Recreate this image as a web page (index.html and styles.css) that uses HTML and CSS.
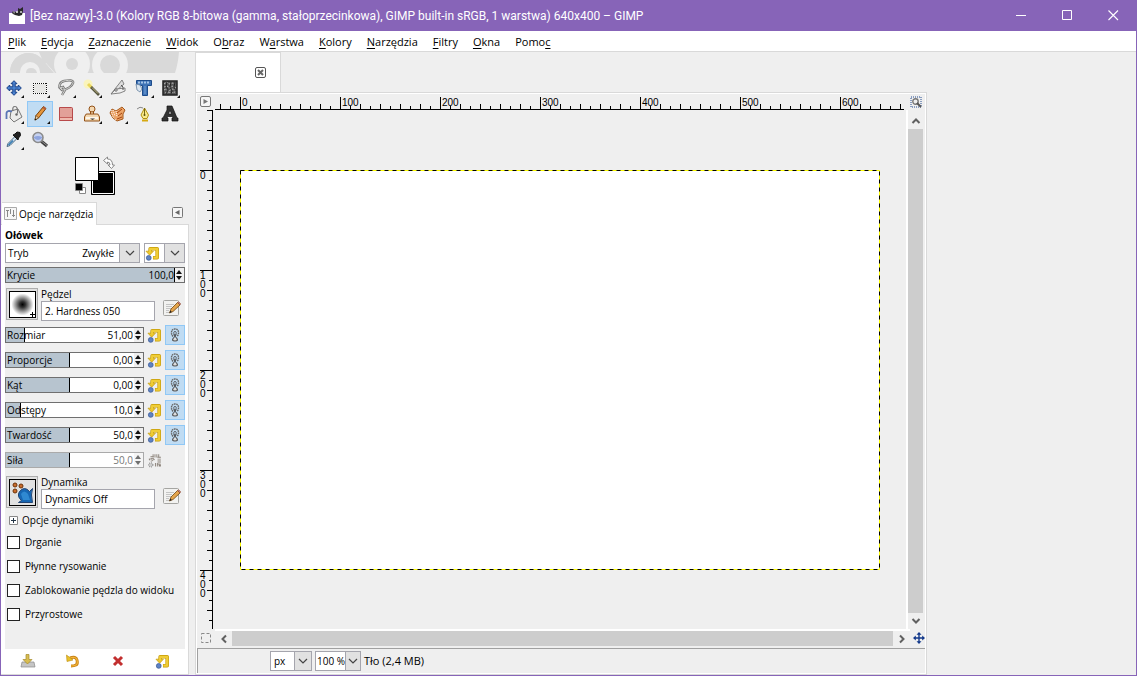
FILE: index.html
```html
<!DOCTYPE html>
<html lang="pl">
<head>
<meta charset="utf-8">
<title>GIMP</title>
<link rel="stylesheet" href="styles.css">
</head>
<body>
<svg class="defs" aria-hidden="true">
  <symbol id="reset" viewBox="0 0 16 16">
    <path d="M8.500 12.500H13V3H5.500v3.500" fill="none" stroke="#c49a06" stroke-width="3.800" stroke-linejoin="round"/>
    <path d="M1 5.500h8L5 9.800z" fill="#edc72c" stroke="#c49a06" stroke-width=".7"/>
    <path d="M9 12.500H13V3H5.500v4" fill="none" stroke="#f0cd36" stroke-width="2.400" stroke-linejoin="round"/>
    <circle cx="4" cy="12.700" r="2.600" fill="#5f83c2" stroke="#2f4f8f" stroke-width=".7"/>
  </symbol>
  <symbol id="link" viewBox="0 0 16 16">
    <g fill="none">
      <path d="M6 9.500Q4.200 7.500 4.500 5 5 2 8 2t3.500 3q.3 2.500-1.500 4.500" stroke="#666" stroke-width="1.400" stroke-dasharray="1.600 .6"/>
      <path d="M8 4.500q-1.300 0-1.300 1.300Q6.700 7 8 8q1.300-1 1.300-2.200Q9.300 4.500 8 4.500z" stroke="#444" stroke-width=".8"/>
      <path d="M6.500 7.500l3 3.500M9.500 7.500l-3 3.500" stroke="#444"/>
      <path d="M6.500 11q-2.500 3 1.500 3t1.500-3" fill="#ddd" stroke="#555" stroke-width="1.200"/>
    </g>
  </symbol>
  <symbol id="edit" viewBox="0 0 18 18">
    <rect x=".5" y="1.500" width="15" height="15" rx="1" fill="#f2f2f0" stroke="#a5a5a2"/>
    <path d="M3 5.500h8M3 7.500h6M3 9.500h5M3 11.500h3M3 13.500h3" stroke="#c4c4c4"/>
    <path d="M6.500 14l1.500-4 6.500-6.500L17 6l-7 6.500z" fill="#e5a54c" stroke="#71460f" stroke-width=".8"/>
    <path d="M14.500 3.500L17 6l.7-1.200-2-2z" fill="#c98787" stroke="#8c4a30" stroke-width=".6"/>
    <path d="M6.500 14l.8-2.500 1.600 1.600z" fill="#222"/>
  </symbol>
  <symbol id="move" viewBox="0 0 16 16">
    <path d="M8 .7l3 3H9.200v3.100h3.100V5l3 3-3 3V9.200H9.200v3.100H11l-3 3-3-3h1.800V9.200H3.700V11l-3-3 3-3v1.800h3.100V3.700H5z" fill="#4a83d0" stroke="#173f86" stroke-width="1"/>
  </symbol>
  <symbol id="pan" viewBox="0 0 12 12">
    <path d="M6 1.500v9M1.500 6h9" stroke="#12388a" stroke-width="1.400"/>
    <path d="M6 0l2.500 2.800h-5zM6 12l2.500-2.800h-5zM0 6l2.800-2.500v5zM12 6L9.200 3.500v5z" fill="#12388a"/>
  </symbol>
  <symbol id="chev" viewBox="0 0 10 10"><path d="M1 3l4 4 4-4" fill="none" stroke="currentColor" stroke-width="1.200"/></symbol>
  <symbol id="arrow" viewBox="0 0 10 10"><path d="M1.500 3l3.500 3.500L8.500 3" fill="none" stroke="#606060" stroke-width="2"/></symbol>
</svg>
<div class="window">
  <header class="titlebar">
    <svg class="app-icon" width="18" height="18" viewBox="0 0 18 18"><path d="M1 6h16v11H1z" fill="#fff"/><path d="M4 6l1-2 2 1 3-1V1l2 1 3-2v4l-1 4-3 1-4-1-2-1z" fill="#282828"/><path d="M5 4l2 1-1 2zM12 4h2v2h-2z" fill="#aaa"/><circle cx="9" cy="5" r="1" fill="#eee"/></svg>
    <h1 class="title">[Bez nazwy]-3.0 (Kolory RGB 8-bitowa (gamma, stałoprzecinkowa), GIMP built-in sRGB, 1 warstwa) 640x400 – GIMP</h1>
    <button class="caption-button" aria-label="Minimalizuj"><svg width="11" height="11"><path d="M0 5.500h10" stroke="#fff"/></svg></button>
    <button class="caption-button" aria-label="Maksymalizuj"><svg width="11" height="11"><path d="M.5.5h9v9h-9z" fill="none" stroke="#fff"/></svg></button>
    <button class="caption-button" aria-label="Zamknij"><svg width="11" height="11"><path d="M.5.5l9.500 9.500M10 .5L.5 10" stroke="#fff" stroke-width="1.100"/></svg></button>
  </header>
  <nav class="menubar">
    <a href="#"><u>P</u>lik</a><a href="#"><u>E</u>dycja</a><a href="#"><u>Z</u>aznaczenie</a><a href="#"><u>W</u>idok</a><a href="#">O<u>b</u>raz</a><a href="#">W<u>a</u>rstwa</a><a href="#"><u>K</u>olory</a><a href="#"><u>N</u>arzędzia</a><a href="#"><u>F</u>iltry</a><a href="#"><u>O</u>kna</a><a href="#">Pomo<u>c</u></a>
  </nav>
  <main class="workspace">
    <aside class="dock">
      <svg class="banner" width="188" height="21" viewBox="0 0 188 21" aria-hidden="true">
        <path d="M9 21C9 9 17 1 28 1c5 0 9 2 13 6l-3-7h140q-1 12-4 21H54L45 11z" fill="#d9d9d9"/>
        <path d="M9 21C9 9 17 1 28 1q8 0 14 7l11 13z" fill="#d9d9d9"/>
        <circle cx="29" cy="20" r="10" fill="#efefef"/><path d="M25 21q0-5 5-5t6 5z" fill="#d9d9d9"/>
        <circle cx="71" cy="12" r="18" fill="#efefef"/><circle cx="109" cy="13" r="18" fill="#efefef"/>
        <circle cx="71" cy="12" r="6" fill="#d9d9d9"/><circle cx="109" cy="13" r="10" fill="#d9d9d9"/>
      </svg>
      <div class="toolbox">
        <button class="tool more" aria-label="Przesunięcie"><svg width="16" height="16"><use href="#move"/></svg></button>
        <button class="tool more" aria-label="Zaznaczenie prostokątne"><svg width="14" height="11"><path d="M.5.5h13v10H.5z" fill="#e6e6e4" stroke="#fff"/><path d="M0 .5h14M0 10.500h14M.5 0v11M13.500 0v11" fill="none" stroke="#111" stroke-dasharray="1 1"/></svg></button>
        <button class="tool more" aria-label="Odręczne zaznaczenie"><svg width="18" height="18"><g fill="none"><path d="M5 10C1 9 2 3 7 2s10-1 9 2-6 7-11 7l-2-2 3-1 2 3-3 5" stroke="#777" stroke-width="2.400"/><path d="M5 10C1 9 2 3 7 2s10-1 9 2-6 7-11 7l-2-2 3-1 2 3-3 5" stroke="#d0d0cd"/></g></svg></button>
        <button class="tool more" aria-label="Zaznaczenie rozmyte"><svg width="18" height="18"><circle cx="5" cy="5" r="4.500" fill="#faf4bb"/><path d="M5 5l4 4" stroke="#e9d65a" stroke-width="3"/><path d="M8 8l8 8" stroke="#55543c" stroke-width="2.600"/><path d="M9 8.500l6 6" stroke="#c2b98a" stroke-width="1"/></svg></button>
        <button class="tool" aria-label="Kadrowanie"><svg width="18" height="18"><path d="M2 15L13 1l2 4-8 7z" fill="#ddd" stroke="#777" stroke-width=".9"/><path d="M2 15l5-5 9-1v3l-5 2z" fill="#eee" stroke="#777" stroke-width=".9"/><circle cx="7" cy="11" r="1.200" fill="#fff" stroke="#666"/><path d="M12 6l2 2v3" stroke="#555" fill="none"/></svg></button>
        <button class="tool more" aria-label="Przekształcenie"><svg width="18" height="18"><path d="M1.500 1.500h15v5h-4v10H7.500v-10h-6z" fill="#3f73b5" stroke="#1c4b8b"/><path d="M3 3.500h12" stroke="#a6c5e8" stroke-width="2" stroke-dasharray="2 1"/><path d="M10 7v8" stroke="#75a1d6"/><path d="M1 5l4 1 2 4-2 3-3-2z" fill="#dce6f0" stroke="#68839f" stroke-width=".8"/></svg></button>
        <button class="tool more" aria-label="Deformacja"><svg width="16" height="16"><path d="M1 1h14v14H1z" fill="#555" stroke="#222" stroke-width="1.500"/><path d="M2 4l3-2 2 2 3-1 3 1M2 7l3-1 3 2 2-2 4 2M2 10l2-1 3 2 3-2 4 1M3 13l3-1 3 1 4-1" fill="none" stroke="#bbb" stroke-dasharray="2 1"/><path d="M5 2l-1 4 2 4-2 4M9 2l-1 5 2 4-1 3M13 2l-1 5 2 4" fill="none" stroke="#222"/></svg></button>
        <button class="tool more" aria-label="Wypełnianie kubełkiem"><svg width="18" height="18"><path d="M6 6l7-2 4 8-8 5-4-4z" fill="#ececea" stroke="#777"/><path d="M8 6Q7 1.500 10 1.500t2.500 7" fill="none" stroke="#777" stroke-width="1.200"/><path d="M7 6.500Q2 5 1.500 8v6" fill="none" stroke="#5a76b5" stroke-width="1.800"/><circle cx="11.500" cy="9.500" r="1.200" fill="#666"/></svg></button>
        <button class="tool more selected" aria-label="Ołówek" aria-pressed="true"><svg width="18" height="18"><path d="M4 15l1-4.500L12.500 1.500 15 3.500 7.500 13z" fill="#e5963c" stroke="#79410a"/><path d="M4 15l1-4.500L7.500 13z" fill="#efd8b5" stroke="#694219" stroke-width=".7"/><path d="M3.500 15.500l1-2 1 1z" fill="#111"/><path d="M11.500 3l2.500 2 1-1.500-2.500-2z" fill="#b95c3c"/></svg></button>
        <button class="tool" aria-label="Gumka"><svg width="14" height="16"><path d="M.5 1.500h12q1 0 1 1v12H.5z" fill="#e2a098" stroke="#b8494a"/><path d="M1 11.500h12" stroke="#c4605c"/><path d="M1 12h12v2H1z" fill="#efb9ae"/></svg></button>
        <button class="tool more" aria-label="Klonowanie"><svg width="18" height="18"><g stroke="#925016" fill="#f4d9b2"><path d="M7.500 6.500h3v4h-3z"/><circle cx="9" cy="4" r="3"/><path d="M2.500 10q0-1 1.500-1h10q1.500 0 1.500 1l1 2v4h-15v-4z"/></g><path d="M3 13h12" stroke="#fff" stroke-width="1.500"/><path d="M7 13.500h5l-2.500 1.500z" fill="#333"/></svg></button>
        <button class="tool more" aria-label="Rozsmarowywanie"><svg width="18" height="18"><path d="M1 8l2-4 4 2 6-4 3 3-2 4v5l-6 2-4-3z" fill="#eca467" stroke="#a65a1d"/><path d="M2 5l2 7 3 3M4 5l2 6M7 6l1 6" fill="none" stroke="#fff" stroke-dasharray="1 1"/><path d="M8 8l5-4M9 11l4-3M8 14l5-2" stroke="#a4430e"/></svg></button>
        <button class="tool" aria-label="Ścieżki"><svg width="18" height="18"><path d="M2 4Q5 1 8 3" fill="none" stroke="#888"/><path d="M9.500 3l4 7-1.500 3.500H8L6 10z" fill="#f8e98c" stroke="#b3920c"/><path d="M9.500 3v7" stroke="#7a6812"/><circle cx="9.500" cy="10" r="1" fill="#5c510d"/><path d="M7 15.500h6" stroke="#d6a911" stroke-width="2"/></svg></button>
        <button class="tool" aria-label="Tekst"><svg width="18" height="18"><path d="M6 1h5l5 12h1v3h-6v-3h1l-.5-1.500h-5L6 13h1v3H1v-3h1L6 5zM9 5l-1.500 4h3z" fill="#333" fill-rule="evenodd" stroke="#111" stroke-width=".7"/></svg></button>
        <button class="tool more" aria-label="Pobranie koloru"><svg width="18" height="18"><path d="M2 15.500l1-3 7-7 2 2-7 7z" fill="#d6e5f2" stroke="#456782"/><path d="M8 4l2-1 2-2 3 .5.500 3L13.500 7 13 9z" fill="#222" stroke="#111"/><path d="M3.500 14l4.500-4.500" stroke="#397eb5" stroke-width="1.600"/></svg></button>
        <button class="tool" aria-label="Powiększenie"><svg width="18" height="18"><path d="M10 10l6 5" stroke="#404040" stroke-width="3.200"/><path d="M11 10.500l5 4" stroke="#8c8c8c"/><circle cx="7" cy="6.500" r="5" fill="#c6d2f1" stroke="#8b8b8b" stroke-width="1.600"/><path d="M3 6q4-2 8 0v1q-4 4-8 0z" fill="#8fa5df"/></svg></button>
      </div>
      <div class="colors">
        <svg width="42" height="42" viewBox="0 0 42 42" role="img" aria-label="Kolor pierwszoplanowy i tła">
          <path d="M17.500 15.500h23v23h-23z" fill="#000" stroke="#000"/><path d="M18.500 16.500h21v21h-21z" fill="none" stroke="#fff"/>
          <path d="M1.500 1.500h23v23h-23z" fill="#fff" stroke="#000"/>
          <path d="M5.500 31.500h6v6h-6z" fill="#fff" stroke="#888"/><path d="M1.500 27.500h7v7h-7z" fill="#000" stroke="#888" stroke-width=".7"/>
          <path d="M33.500 1v2q5 0 5 6h2l-3 3.500-3.500-3.500h2q0-3-2.500-3v2L29.500 4.500z" fill="#fff" stroke="#888"/>
        </svg>
      </div>
      <div class="tabs">
        <button class="dock-tab"><svg width="13" height="13"><path d="M.5.5h12v12H.5z" fill="#f7f7f7" stroke="#aaa"/><path d="M3.500 3v7M6.500 2v5M9.500 3v7M2 3.500h3M8 8.500h3" stroke="#888"/></svg>Opcje narzędzia</button>
        <button class="square-button" aria-label="Menu karty"><svg width="12" height="12"><rect x=".5" y=".5" width="10" height="10" rx="1" fill="#f5f5f5" stroke="#777"/><path d="M7.500 3v5L3 5.500z" fill="#666"/></svg></button>
      </div>
      <section class="options">
        <h2>Ołówek</h2>
        <div class="mode">
          <div class="combo mode-combo"><label for="mode">Tryb</label><select id="mode"><option>Zwykłe</option></select><span class="combo-arrow"><svg width="10" height="10"><use href="#chev"/></svg></span></div>
          <button class="combo reset-combo" aria-label="Grupa trybów"><svg class="reset-icon" width="15" height="15"><use href="#reset"/></svg><span class="combo-arrow"><svg width="10" height="10"><use href="#chev"/></svg></span></button>
        </div>
        <div class="fields">
          <div class="spin opacity"><span class="track"><span class="fill" style="width:100%"></span></span><label for="opacity">Krycie</label><input id="opacity" value="100,0"><span class="steps"></span></div>
          <div class="resource">
            <button class="preview" aria-label="Wybierz pędzel"><span class="brush"></span></button>
            <div class="resource-name"><label for="brush">Pędzel</label><input id="brush" value="2. Hardness 050"></div>
            <button class="edit" aria-label="Edytuj pędzel"><svg width="18" height="18"><use href="#edit"/></svg></button>
          </div>
          <div class="sliders">
            <div class="slider"><div class="spin"><span class="track"><span class="fill" style="width:15%"></span></span><label for="size">Rozmiar</label><input id="size" value="51,00"><span class="steps"></span></div><button class="reset" aria-label="Przywróć"><svg width="15" height="15"><use href="#reset"/></svg></button><button class="link" aria-label="Połącz"><svg width="16" height="16"><use href="#link"/></svg></button></div>
            <div class="slider"><div class="spin"><span class="track"><span class="fill" style="width:50%"></span></span><label for="ratio">Proporcje</label><input id="ratio" value="0,00"><span class="steps"></span></div><button class="reset" aria-label="Przywróć"><svg width="15" height="15"><use href="#reset"/></svg></button><button class="link" aria-label="Połącz"><svg width="16" height="16"><use href="#link"/></svg></button></div>
            <div class="slider"><div class="spin"><span class="track"><span class="fill" style="width:50%"></span></span><label for="angle">Kąt</label><input id="angle" value="0,00"><span class="steps"></span></div><button class="reset" aria-label="Przywróć"><svg width="15" height="15"><use href="#reset"/></svg></button><button class="link" aria-label="Połącz"><svg width="16" height="16"><use href="#link"/></svg></button></div>
            <div class="slider"><div class="spin"><span class="track"><span class="fill" style="width:12%"></span></span><label for="spacing">Odstępy</label><input id="spacing" value="10,0"><span class="steps"></span></div><button class="reset" aria-label="Przywróć"><svg width="15" height="15"><use href="#reset"/></svg></button><button class="link" aria-label="Połącz"><svg width="16" height="16"><use href="#link"/></svg></button></div>
            <div class="slider"><div class="spin"><span class="track"><span class="fill" style="width:50%"></span></span><label for="hardness">Twardość</label><input id="hardness" value="50,0"><span class="steps"></span></div><button class="reset" aria-label="Przywróć"><svg width="15" height="15"><use href="#reset"/></svg></button><button class="link" aria-label="Połącz"><svg width="16" height="16"><use href="#link"/></svg></button></div>
            <div class="slider"><div class="spin disabled"><span class="track"><span class="fill" style="width:50%"></span></span><label for="force">Siła</label><input id="force" value="50,0" disabled><span class="steps"></span></div><button class="reset" aria-label="Przywróć" disabled><svg width="15" height="15" viewBox="0 0 16 16"><path d="M8.500 12.500H13V3H5.500v4" fill="none" stroke="#8a8178" stroke-width="3.600" stroke-dasharray="1 1"/><path d="M2 6.500h6L5 9z" fill="none" stroke="#8a8178" stroke-width="1.200" stroke-dasharray="1 1"/><circle cx="4" cy="12.700" r="2.300" fill="#ccc" stroke="#777" stroke-dasharray="1 1"/></svg></button></div>
          </div>
          <div class="resource">
            <button class="preview" aria-label="Wybierz dynamikę"><span class="dynamics"><svg width="25" height="25"><g fill="#c86b2a" stroke="#6d3208"><circle cx="5" cy="5" r="2"/><circle cx="11" cy="6" r="2"/><circle cx="5" cy="11" r="2"/></g><path d="M22.500 8.500q-2 6 0 14h-14l3-2q-5-4-2-9 5-6 10 0z" fill="#1767b3" stroke="#234573"/><path d="M11 14q3-5 7 0l2 6h-7z" fill="#2f89d1"/></svg></span></button>
            <div class="resource-name"><label for="dynamics">Dynamika</label><input id="dynamics" value="Dynamics Off"></div>
            <button class="edit" aria-label="Edytuj dynamikę"><svg width="18" height="18"><use href="#edit"/></svg></button>
          </div>
          <button class="expander"><svg width="9" height="9"><path d="M.5.5h8v8h-8z" fill="#fff" stroke="#888"/><path d="M2 4.500h5M4.500 2v5" stroke="#234"/></svg>Opcje dynamiki</button>
          <div class="checks">
            <label><input type="checkbox">Drganie</label>
            <label><input type="checkbox">Płynne rysowanie</label>
            <label><input type="checkbox">Zablokowanie pędzla do widoku</label>
            <label><input type="checkbox">Przyrostowe</label>
          </div>
        </div>
        <footer class="options-footer">
          <button aria-label="Zapisz"><svg width="16" height="16"><path d="M2 9h12l1 5H1z" fill="#c5c5c5" stroke="#8a8a8a" stroke-width=".7"/><path d="M6 1.500h3v5h3l-4.500 4.500L3 6.500h3z" fill="#d8bd52" stroke="#a58a2a" stroke-width=".7"/></svg></button>
          <button aria-label="Odtwórz"><svg width="16" height="16"><path d="M5 5q6-2 7 2t-1 5-5 1" fill="none" stroke="#c98214" stroke-width="3"/><path d="M5 5q6-2 7 2t-1 5-5 1" fill="none" stroke="#f2b53a" stroke-width="1.200"/><path d="M1.500 2l.5 6.500L8 7z" fill="#e9c22b" stroke="#bb8a0c" stroke-width=".6"/></svg></button>
          <button aria-label="Usuń"><svg width="16" height="16"><path d="M4 4l8 8M12 4l-8 8" stroke="#c22f2f" stroke-width="3"/></svg></button>
          <button aria-label="Przywróć domyślne"><svg width="15" height="15"><use href="#reset"/></svg></button>
        </footer>
      </section>
    </aside>
    <section class="document">
      <div class="document-tab"><button class="square-button" aria-label="Zamknij kartę"><svg width="12" height="12"><rect x=".5" y=".5" width="10" height="10" rx="1.500" fill="#fff" stroke="#555"/><path d="M3 3l5 5M8 3L3 8" stroke="#666" stroke-width="2"/></svg></button></div>
      <div class="document-page">
        <div class="view">
          <button class="corner" aria-label="Menu obrazu"><svg width="12" height="12"><rect x=".5" y=".5" width="10" height="10" rx="1.500" fill="#f5f5f5" stroke="#777"/><path d="M3.500 3v5L8 5.500z" fill="#777"/></svg></button>
          <div class="ruler horizontal"><span>0</span><span>100</span><span>200</span><span>300</span><span>400</span><span>500</span><span>600</span></div>
          <button class="corner" aria-label="Powiększ"><svg width="12" height="12"><path d="M1 1h10v10H1z" fill="none" stroke="#234a90" stroke-dasharray="1 1"/><circle cx="5.500" cy="5.500" r="2.700" fill="#eee" stroke="#777" stroke-width="1.400"/><path d="M7 7l4 4" stroke="#555" stroke-width="2"/></svg></button>
          <div class="ruler vertical"><span>0</span><span>1<br>0<br>0</span><span>2<br>0<br>0</span><span>3<br>0<br>0</span><span>4<br>0<br>0</span></div>
          <div class="canvas"><svg class="image" width="640" height="400" role="img" aria-label="Pusty obraz"><path d="M0 0h640v400H0z" fill="#fff"/><path d="M.5.5h639v399H.5z" fill="none" stroke="#ff0"/><path d="M.5.5h639v399H.5z" fill="none" stroke="#000" stroke-dasharray="4 4"/></svg></div>
          <div class="scroll vertical-scroll"><button aria-label="W górę"><svg class="up" width="10" height="10"><use href="#arrow"/></svg></button><div class="thumb"></div><button aria-label="W dół"><svg width="10" height="10"><use href="#arrow"/></svg></button></div>
          <button class="corner" aria-label="Szybka maska"><svg width="12" height="12"><path d="M1.500 1.500h9v9h-9z" fill="none" stroke="#888" stroke-dasharray="3 2"/></svg></button>
          <div class="scroll horizontal-scroll"><button aria-label="W lewo"><svg class="left" width="10" height="10"><use href="#arrow"/></svg></button><div class="thumb"></div><button aria-label="W prawo"><svg class="right" width="10" height="10"><use href="#arrow"/></svg></button></div>
          <button class="corner pan" aria-label="Nawigacja"><svg width="12" height="12"><use href="#pan"/></svg></button>
        </div>
        <footer class="status">
          <div class="combo unit"><select aria-label="Jednostka"><option>px</option></select><span class="combo-arrow"><svg width="10" height="10"><use href="#chev"/></svg></span></div>
          <div class="combo zoom"><select aria-label="Powiększenie widoku"><option>100 %</option></select><span class="combo-arrow"><svg width="10" height="10"><use href="#chev"/></svg></span></div>
          <span>Tło (2,4 MB)</span>
        </footer>
      </div>
    </section>
    <aside class="empty-dock"></aside>
  </main>
</div>
</body>
</html>
```

FILE: styles.css
```css
* { box-sizing: border-box; }
html, body { height: 100%; margin: 0; }
body { font: 11px/16px "Open Sans", "Noto Sans", sans-serif; color: #000; background: #efefef; overflow: hidden; }
button, input, select { font: inherit; color: inherit; margin: 0; padding: 0; border: 0; background: none; border-radius: 0; }
button { display: flex; align-items: center; justify-content: center; }
select { appearance: none; outline: 0; }
input { min-width: 0; }
svg { display: block; flex: none; }
.defs { display: none; }

.window { display: flex; flex-direction: column; height: 100%; border: 1px solid #8764b8; border-top: 0; }

.titlebar { display: flex; flex: none; align-items: center; height: 31px; padding-left: 7px; background: #8764b8; color: #fff; }
.title { flex: 1; min-width: 0; margin: 0 0 0 4px; font-family: Roboto, "Open Sans", sans-serif; font-size: 12px; font-weight: 400; white-space: nowrap; }
.caption-button { width: 46px; height: 31px; }

.menubar { display: flex; flex: none; gap: 15px; height: 21px; padding: 3px 7px 0; background: #fff; border-bottom: 1px solid #d9d9d9; }
.menubar a { color: inherit; text-decoration: none; }
.menubar u { text-underline-offset: 2px; }

.workspace { display: flex; flex: 1; min-height: 0; }
.dock { display: flex; flex-direction: column; flex: none; width: 188px; margin-right: 6px; font-size: 10px; }
.banner { margin-bottom: 2px; }
.toolbox { display: grid; grid-template-columns: repeat(7, 26px); grid-auto-rows: 26px; }
.tool { position: relative; border: 1px solid transparent; }
.tool.selected { background: #c0dcf3; border-color: #90c8f6; }
.tool.more::after { content: ""; position: absolute; right: 2px; bottom: 2px; border-left: 3px solid transparent; border-bottom: 3px solid #111; }
.colors { display: flex; justify-content: center; padding: 3px 0 4px; }
.tabs { display: flex; align-items: center; justify-content: space-between; height: 22px; padding-right: 5px; }
.dock-tab { gap: 2px; height: 23px; margin-left: 1px; padding: 0 3px 0 2px; background: #fff; border: 1px solid #d9d9d9; border-bottom: 0; border-left: 0; z-index: 1; }
.options { display: flex; flex-direction: column; flex: 1; border: 1px solid #d9d9d9; border-left: 0; background: #fff; padding: 2px 3px 1px 4px; }
.options h2 { margin: 0; font-size: 10px; line-height: 16px; font-weight: 700; }

.combo { position: relative; display: flex; align-items: stretch; height: 20px; border: 1px solid #a5a5ad; background: #fff; }
.combo-arrow { display: flex; flex: none; align-items: center; justify-content: center; width: 20px; border-left: 1px solid #a5a5ad; background: #e1e1e1; color: #444; pointer-events: none; }
.mode { display: flex; justify-content: space-between; }
.mode-combo { width: 135px; padding-left: 2px; line-height: 18px; }
.mode-combo select { flex: 1; min-width: 0; padding-right: 5px; text-align: right; text-align-last: right; }
.reset-combo { width: 41px; justify-content: space-between; }
.reset-icon { align-self: center; }

.fields { flex: 1; background: #efefef; padding-top: 4px; }
.spin { position: relative; display: flex; align-items: center; justify-content: space-between; width: 139px; height: 16px; border: 1px solid #6f6f6f; background: #fff; }
.spin.opacity { width: 100%; }
.track { position: absolute; inset: 0 9px 0 0; }
.fill { display: block; height: 100%; background: #b7c4cf; border-right: 1px solid #000; }
.spin label, .spin input { position: relative; padding-left: 1px; line-height: 14px; }
.spin input { width: 50px; height: 14px; margin-left: auto; padding-right: 1px; text-align: right; }
.steps { position: relative; flex: none; width: 9px; height: 14px; background: #efefef; }
.steps::before, .steps::after { content: ""; position: absolute; left: 1px; border: 3px solid transparent; }
.steps::before { top: -1px; border-bottom: 4px solid #111; }
.steps::after { bottom: -1px; border-top: 4px solid #111; }
.spin.disabled { border-color: #aaa; }
.disabled input { color: #777; }
.disabled .steps { opacity: .6; }

.resource { display: flex; height: 33px; margin-top: 5px; }
.preview { flex: none; width: 32px; height: 32px; margin-left: 1px; background: #e1e1e1; border: 1px solid #adadad; }
.brush, .dynamics { position: relative; width: 27px; height: 27px; border: 1px solid #000; background: #fff; }
.brush { background: radial-gradient(circle, #000 0, #333 3px, #999 7px, #fff 11px); }
.brush::after { content: ""; position: absolute; right: 0; bottom: 0; width: 5px; height: 5px; background: linear-gradient(#000, #000) center / 5px 1px no-repeat, linear-gradient(#000, #000) center / 1px 5px no-repeat; }
.dynamics { background: #e1e1e1; }
.resource-name { display: flex; flex-direction: column; flex: 1; margin-left: 3px; }
.resource-name label { line-height: 12px; margin-bottom: 1px; }
.resource-name input { height: 20px; width: 114px; padding-left: 3px; border: 1px solid #a5a5ad; background: #fff; }
.edit { width: 26px; padding-top: 6px; }

.sliders { display: grid; gap: 5px; margin: 4px 0 6px; }
.slider { display: flex; align-items: center; height: 20px; }
.reset { width: 21px; height: 20px; }
.link { width: 20px; height: 20px; background: #c0dcf3; border: 1px solid #90c8f6; }
.expander { gap: 4px; margin: 3px 0 6px 4px; }
.checks { display: grid; gap: 8px; margin-left: 2px; }
.checks label { display: flex; align-items: center; gap: 5px; }
.checks input { appearance: none; width: 13px; height: 13px; border: 1px solid #222; background: #fff; }
.options-footer { display: flex; justify-content: space-around; align-items: center; height: 24px; }

.document { display: flex; flex-direction: column; flex: 1; min-width: 0; }
.document-tab { display: flex; align-items: center; justify-content: flex-end; flex: none; width: 86px; height: 40px; padding-right: 13px; background: #fff; border: 1px solid #d9d9d9; border-width: 1px 1px 0; }
.document-page { display: flex; flex-direction: column; flex: 1; min-height: 0; padding: 2px 1px 1px; background: #fff; border: 1px solid #d9d9d9; border-top: 0; box-shadow: inset 0 1px #d9d9d9; }
.view { display: grid; flex: 1; grid-template: 16px minmax(0, 1fr) 17px / 18px minmax(0, 1fr) 19px; min-height: 0; padding-bottom: 2px; background: #efefef; }
.ruler { position: relative; overflow: hidden; font: 10px/10px "Liberation Sans", sans-serif; }
.ruler span { flex: none; }
.horizontal { display: flex; margin-right: 2px; padding-left: 27px; border-bottom: 1px solid #000; background: repeating-linear-gradient(90deg, #000 0 1px, transparent 1px 100px) 25px 100% / 100% 12px no-repeat, repeating-linear-gradient(90deg, #000 0 1px, transparent 1px 20px) 5px 100% / 100% 5px no-repeat, repeating-linear-gradient(90deg, #000 0 1px, transparent 1px 10px) 5px 100% / 100% 3px no-repeat; }
.horizontal span { width: 100px; padding-top: 4px; }
.vertical { padding-top: 61px; margin-right: 2px; border-right: 1px solid #000; background: repeating-linear-gradient(#000 0 1px, transparent 1px 100px) 100% 60px / 12px 100% no-repeat, repeating-linear-gradient(#000 0 1px, transparent 1px 20px) 100% 0 / 5px 100% no-repeat, repeating-linear-gradient(#000 0 1px, transparent 1px 10px) 100% 0 / 3px 100% no-repeat; line-height: 9px; }
.vertical span { display: block; width: 8px; height: 100px; margin-left: 3px; }
.canvas { overflow: hidden; padding: 60px 0 0 25px; }
.corner { align-self: center; justify-self: center; }
.pan { justify-self: end; }
.scroll { display: flex; }
.scroll .thumb { flex: 1; background: #cdcdcd; }
.scroll button { flex: none; width: 17px; height: 17px; }
.vertical-scroll { flex-direction: column; padding: 3px 2px 0 0; border-left: 2px solid #fff; }
.vertical-scroll button { width: 15px; height: 16px; }
.horizontal-scroll { margin-right: -4px; border-top: 2px solid #fff; }
.horizontal-scroll button { height: 15px; }
.up { transform: rotate(180deg); }
.left { transform: rotate(90deg); }
.right { transform: rotate(-90deg); }
.status { display: flex; flex: none; align-items: center; gap: 3px; height: 25px; padding-left: 72px; background: #efefef; border-top: 1px solid #a0a0a0; border-left: 1px solid #a0a0a0; }
.unit select, .zoom select { flex: 1; min-width: 0; padding-left: 3px; font-size: 10px; }
.zoom select { padding-left: 1px; }
.status .combo-arrow { width: 17px; }
.status .zoom .combo-arrow { width: 15px; }
.unit { width: 42px; }
.zoom { width: 46px; }
.empty-dock { flex: none; width: 209px; }
```
